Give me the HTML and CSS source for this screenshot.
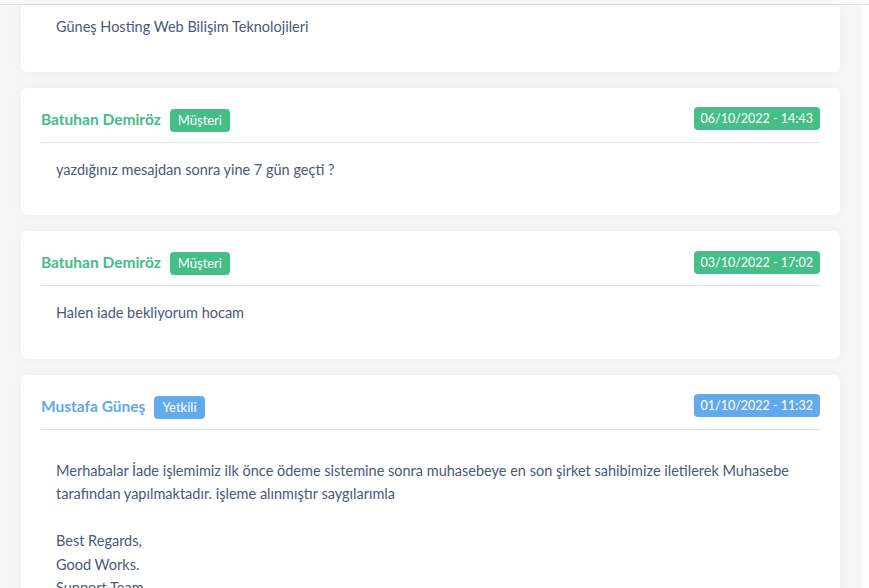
FILE: index.html
```html
<!DOCTYPE html>
<html lang="tr">
<head>
<meta charset="UTF-8">
<title>Destek Talebi</title>
<meta name="viewport" content="width=device-width, initial-scale=1.0">
<link rel="stylesheet" href="styles.css">
</head>
<body>
<div class="topbar"></div>
<div class="page">
    <div class="replies">
        <div class="reply reply-cut">
            <div class="msg">Güneş Hosting Web Bilişim Teknolojileri</div>
        </div>
        <div class="reply">
            <div class="reply-head">
                <div class="who">
                    <span class="name client">Batuhan Demiröz</span>
                    <span class="badge client">Müşteri</span>
                </div>
                <span class="date client">06/10/2022 - 14:43</span>
            </div>
            <div class="msg">yazdığınız mesajdan sonra yine 7 gün geçti ?</div>
        </div>
        <div class="reply">
            <div class="reply-head">
                <div class="who">
                    <span class="name client">Batuhan Demiröz</span>
                    <span class="badge client">Müşteri</span>
                </div>
                <span class="date client">03/10/2022 - 17:02</span>
            </div>
            <div class="msg">Halen iade bekliyorum hocam</div>
        </div>
        <div class="reply">
            <div class="reply-head">
                <div class="who">
                    <span class="name staff">Mustafa Güneş</span>
                    <span class="badge staff">Yetkili</span>
                </div>
                <span class="date staff">01/10/2022 - 11:32</span>
            </div>
            <div class="msg msg-long">
                Merhabalar İade işlemimiz ilk önce ödeme sistemine sonra muhasebeye en son şirket sahibimize iletilerek Muhasebe tarafından yapılmaktadır. işleme alınmıştır saygılarımla<br><br>
                Best Regards,<br>
                Good Works.<br>
                Support Team<br>
                Güneş Hosting Web Bilişim Teknolojileri
            </div>
        </div>
    </div>
    <div class="side"></div>
</div>
</body>
</html>
```

FILE: styles.css
```css
body {
    margin: 0;
    padding: 0;
    background-color: #f6f6f6;
    font-family: Lato, "Noto Sans", sans-serif;
    color: #4b5877;
    height: 588px;
    overflow: hidden;
}

.topbar {
    height: 4px;
    background-color: #fafafa;
    border-bottom: 1px solid #dedede;
}

.page {
    display: flex;
}

.replies {
    flex: 1;
    display: flex;
    flex-direction: column;
    gap: 16px;
    padding: 0 21px;
}

.side {
    width: 8px;
    min-height: 600px;
    background-color: #fdfdfd;
}

.reply {
    background-color: #fff;
    border-radius: 6px;
    box-shadow: 0 0 12px rgba(0, 0, 0, 0.035);
    padding: 0 20px 34px;
}

/* first reply is scrolled half out of view */
.reply-cut {
    border-radius: 0 0 6px 6px;
    padding-top: 10px;
    padding-bottom: 33px;
}

.reply-cut .msg {
    padding-top: 0;
}

.reply-head {
    display: flex;
    align-items: center;
    justify-content: space-between;
    padding: 18px 0 10px;
    border-bottom: 1px solid #e2e2e2;
}

.who {
    display: flex;
    align-items: center;
    gap: 9px;
}

.name {
    font-weight: bold;
    font-size: 15.5px;
}

.name.client { color: #45bc87; }
.name.staff { color: #64a8e8; }

.badge, .date {
    color: #fff;
    font-size: 13px;
    line-height: 23px;
    padding: 0 8px;
    border-radius: 4px;
}

.date {
    font-size: 12.5px;
    padding: 0 7px;
}

.badge { margin-top: 3px; }

.badge.client, .date.client { background-color: #45be88; }
.badge.staff, .date.staff { background-color: #63aaea; }

.msg {
    font-size: 14.5px;
    line-height: 23.5px;
    padding: 15px 15px 0;
}

.msg-long {
    padding-top: 29px;
}
```
